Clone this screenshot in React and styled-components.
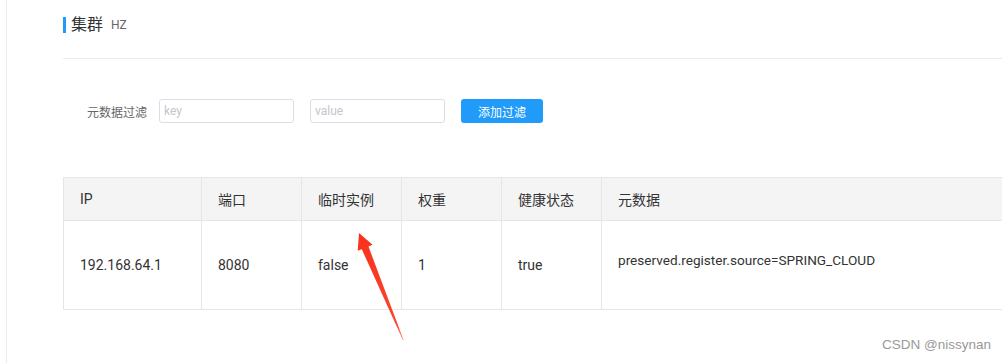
import React from 'react';
import styled, { createGlobalStyle } from 'styled-components';

const GlobalStyle = createGlobalStyle`
  html, body {
    margin: 0;
    padding: 0;
    background: #fff;
    overflow: hidden;
  }
  body {
    font-family: Roboto, "Noto Sans CJK SC", sans-serif;
    color: #333;
  }
`;

const Page = styled.div`
  position: relative;
  display: flex;
  width: 1002px;
  height: 363px;
  overflow: hidden;
`;

const Rail = styled.div`
  width: 6px;
  flex-shrink: 0;
  border-right: 1px solid #ececec;
`;

const Main = styled.div`
  flex: 1;
  min-width: 0;
  padding-left: 56px;
  overflow: hidden;
`;

const TitleRow = styled.div`
  display: flex;
  align-items: center;
  margin-top: 17px;
  padding-bottom: 25px;
  border-bottom: 1px solid #ebebeb;
  margin-right: -20px;
`;

const TitleBar = styled.span`
  width: 3px;
  height: 16px;
  background: #209bfa;
  margin-right: 5px;
`;

const TitleText = styled.span`
  font-size: 16px;
  line-height: 16px;
  color: #333;
`;

const TitleSub = styled.span`
  font-size: 12px;
  line-height: 16px;
  color: #666;
  margin-left: 8px;
`;

const FilterRow = styled.div`
  display: flex;
  align-items: center;
  margin-top: 40px;
  padding-left: 24px;
`;

const FilterLabel = styled.span`
  font-size: 12px;
  color: #666;
  margin-right: 12px;
`;

const Input = styled.input`
  box-sizing: border-box;
  width: 135px;
  height: 24px;
  margin-right: 16px;
  padding: 0 4px;
  border: 1px solid #dcdee3;
  border-radius: 3px;
  font-family: inherit;
  font-size: 12px;
  color: #333;
  outline: none;
  &::placeholder {
    color: #c4c6cf;
  }
`;

const PrimaryButton = styled.button`
  box-sizing: border-box;
  width: 82px;
  height: 24px;
  border: none;
  border-radius: 3px;
  background: #209bfa;
  color: #fff;
  font-family: inherit;
  font-size: 12px;
  cursor: pointer;
`;

const Table = styled.div`
  display: grid;
  grid-template-columns: 138px 100px 100px 100px 100px 1fr;
  margin-top: 54px;
  margin-right: -40px;
  border-top: 1px solid #e6e6e6;
  border-left: 1px solid #e6e6e6;
`;

const Cell = styled.div`
  box-sizing: border-box;
  display: flex;
  align-items: center;
  padding: 0 16px ${(p) => p.$lift || 0}px;
  height: ${(p) => (p.$head ? 43 : 89)}px;
  background: ${(p) => (p.$head ? '#f4f4f4' : '#fff')};
  border-right: 1px solid #e6e6e6;
  border-bottom: 1px solid #e6e6e6;
  font-size: ${(p) => (p.$small ? 13.6 : 14)}px;
  color: #333;
  white-space: nowrap;
`;

const Arrow = styled.svg`
  position: absolute;
  left: 0;
  top: 0;
  pointer-events: none;
`;

const Watermark = styled.div`
  position: absolute;
  left: 882px;
  top: 337px;
  font-family: "Liberation Sans", Arial, sans-serif;
  font-size: 13.5px;
  color: #999;
`;

const columns = ['IP', '端口', '临时实例', '权重', '健康状态', '元数据'];
const row = ['192.168.64.1', '8080', 'false', '1', 'true', 'preserved.register.source=SPRING_CLOUD'];

export default function App() {
  return (
    <>
      <GlobalStyle />
      <Page>
        <Rail />
        <Main>
          <TitleRow>
            <TitleBar />
            <TitleText>集群</TitleText>
            <TitleSub>HZ</TitleSub>
          </TitleRow>

          <FilterRow>
            <FilterLabel>元数据过滤</FilterLabel>
            <Input placeholder="key" />
            <Input placeholder="value" />
            <PrimaryButton>添加过滤</PrimaryButton>
          </FilterRow>

          <Table>
            {columns.map((c) => (
              <Cell key={c} $head>{c}</Cell>
            ))}
            {row.map((v, i) => (
              <Cell key={i} $lift={i === 5 ? 10 : 0} $small={i === 5}>{v}</Cell>
            ))}
          </Table>
        </Main>

        <Arrow width="1002" height="363" viewBox="0 0 1002 363">
          <defs>
            <linearGradient id="arrowFade" x1="359" y1="233" x2="403" y2="340" gradientUnits="userSpaceOnUse">
              <stop offset="0" stopColor="#f8321c" />
              <stop offset="0.85" stopColor="#fa4530" />
              <stop offset="1" stopColor="#ff9080" />
            </linearGradient>
          </defs>
          <polygon
            points="359,233 372.5,244.8 368.5,246.6 403.6,340 402.8,340 361.8,249.2 357.7,250.8"
            fill="url(#arrowFade)"
          />
        </Arrow>
        <Watermark>CSDN @nissynan</Watermark>
      </Page>
    </>
  );
}
